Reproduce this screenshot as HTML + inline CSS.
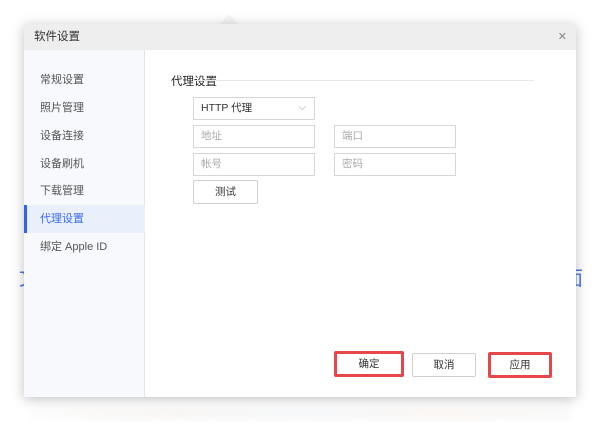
<!DOCTYPE html>
<html><head><meta charset="utf-8"><style>
*{margin:0;padding:0;box-sizing:border-box}
body{width:600px;height:422px;background:#fff;position:relative;overflow:hidden;font-family:"Liberation Sans","Noto Sans CJK SC",sans-serif;font-size:11px;color:#333}
.dlg{position:absolute;left:24px;top:24px;width:552px;height:373px;background:#fff;box-shadow:0 2px 12px rgba(0,0,0,.25);z-index:2}
.title{height:26px;background:#eeeeee;padding-left:10px;line-height:27px;font-size:11.5px;color:#333;position:relative}
.close{position:absolute;right:9px;top:0;color:#888;font-size:11px}
.side{position:absolute;left:0;top:26px;width:121px;bottom:0;background:#f7f9fd;border-right:1px solid #e6e6e6}
.item{position:absolute;left:0;width:121px;height:28px;line-height:28px;padding-left:16px;color:#555;font-size:11px}
.item.act{background:#e9effb;color:#3a6cf0;border-left:3px solid #2f62f5;padding-left:13px}
.abs{position:absolute}
.inp{position:absolute;border:1px solid #d6d6d6;background:#fff;height:23px;line-height:21px;padding-left:7px;color:#aaa;font-size:10.5px}
.btn{position:absolute;border:1px solid #d0d0d0;background:#fff;text-align:center;color:#333;font-size:10.5px;border-radius:2px}
.red{border:3px solid #e5474a}
</style></head><body>
<div class="abs" style="left:220px;top:14px;width:0;height:0;border-left:9px solid transparent;border-right:9px solid transparent;border-bottom:10px solid #eee;opacity:.6"></div>
<div class="abs" style="left:19px;top:262px;color:#4a78e8;font-size:20px">文</div>
<div class="abs" style="left:563px;top:262px;color:#4a78e8;font-size:20px">面</div>
<div class="abs" style="left:30px;top:408px;width:540px;height:12px;background:linear-gradient(90deg,#fbfbfb,#f6f1ed,#f1f5f9,#f8f2ed,#f7f7f7);opacity:.6;filter:blur(2px)"></div>
<div class="dlg">
<div class="title">软件设置<span class="close">✕</span></div>
<div class="side">
<div class="item" style="top:16px">常规设置</div>
<div class="item" style="top:44px">照片管理</div>
<div class="item" style="top:72px">设备连接</div>
<div class="item" style="top:100px">设备刷机</div>
<div class="item" style="top:127px">下载管理</div>
<div class="item act" style="top:155px">代理设置</div>
<div class="item" style="top:183px">绑定 Apple ID</div>
</div>
<div class="abs" style="left:147px;top:49px;font-size:11.5px;color:#222">代理设置</div>
<div class="abs" style="left:170px;top:56px;width:340px;height:1px;background:#e8e8e8"></div>
<div class="inp" style="left:169px;top:73px;width:122px;color:#333">HTTP 代理<span style="position:absolute;right:8px;top:-1px;color:#999;font-size:10px">⌵</span></div>
<div class="inp" style="left:169px;top:101px;width:122px">地址</div>
<div class="inp" style="left:310px;top:101px;width:122px">端口</div>
<div class="inp" style="left:169px;top:129px;width:122px">帐号</div>
<div class="inp" style="left:310px;top:129px;width:122px">密码</div>
<div class="btn" style="left:169px;top:156px;width:65px;height:24px;line-height:22px">测试</div>
<div class="btn red" style="left:310px;top:327px;width:70px;height:26px;line-height:20px">确定</div>
<div class="btn" style="left:388px;top:329px;width:64px;height:24px;line-height:22px">取消</div>
<div class="btn red" style="left:464px;top:328px;width:64px;height:26px;line-height:20px">应用</div>
</div>
</body></html>
